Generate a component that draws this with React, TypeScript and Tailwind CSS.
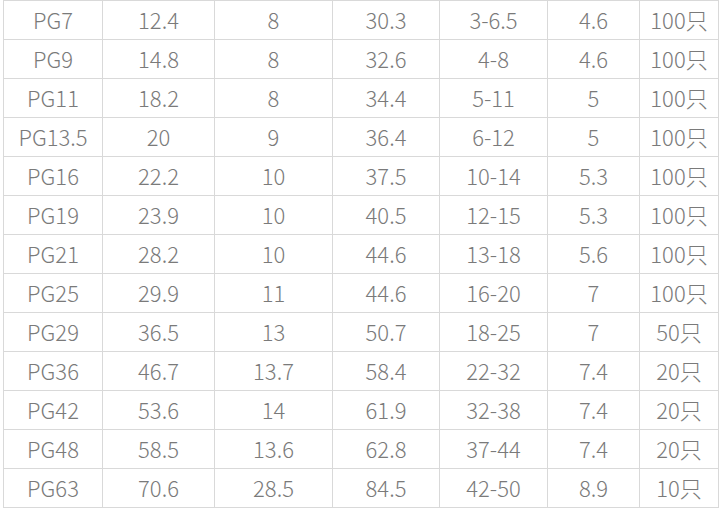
const rows: string[][] = [
  ["PG7", "12.4", "8", "30.3", "3-6.5", "4.6", "100只"],
  ["PG9", "14.8", "8", "32.6", "4-8", "4.6", "100只"],
  ["PG11", "18.2", "8", "34.4", "5-11", "5", "100只"],
  ["PG13.5", "20", "9", "36.4", "6-12", "5", "100只"],
  ["PG16", "22.2", "10", "37.5", "10-14", "5.3", "100只"],
  ["PG19", "23.9", "10", "40.5", "12-15", "5.3", "100只"],
  ["PG21", "28.2", "10", "44.6", "13-18", "5.6", "100只"],
  ["PG25", "29.9", "11", "44.6", "16-20", "7", "100只"],
  ["PG29", "36.5", "13", "50.7", "18-25", "7", "50只"],
  ["PG36", "46.7", "13.7", "58.4", "22-32", "7.4", "20只"],
  ["PG42", "53.6", "14", "61.9", "32-38", "7.4", "20只"],
  ["PG48", "58.5", "13.6", "62.8", "37-44", "7.4", "20只"],
  ["PG63", "70.6", "28.5", "84.5", "42-50", "8.9", "10只"],
];

const widths = ["w-[99px]", "w-[112px]", "w-[118px]", "w-[107px]", "w-[108px]", "w-[92px]", "w-[79px]"];

export default function App() {
  return (
    <div className="h-[513px] w-[719px] bg-white pl-[3px]">
      <table
        className="table-fixed border-collapse text-[22px] font-light text-[#7a7a7a]"
        style={{ fontFamily: '"Noto Sans CJK SC", "Noto Sans", sans-serif' }}
      >
        <colgroup>
          {widths.map((w, i) => (
            <col key={i} className={w} />
          ))}
        </colgroup>
        <tbody>
          {rows.map((r, i) => (
            <tr key={i} className="h-[39px]">
              {r.map((c, j) => (
                <td
                  key={j}
                  className="border border-[#d9d9d9] p-0 pb-[2px] text-center leading-none"
                >
                  {c}
                </td>
              ))}
            </tr>
          ))}
        </tbody>
      </table>
    </div>
  );
}
